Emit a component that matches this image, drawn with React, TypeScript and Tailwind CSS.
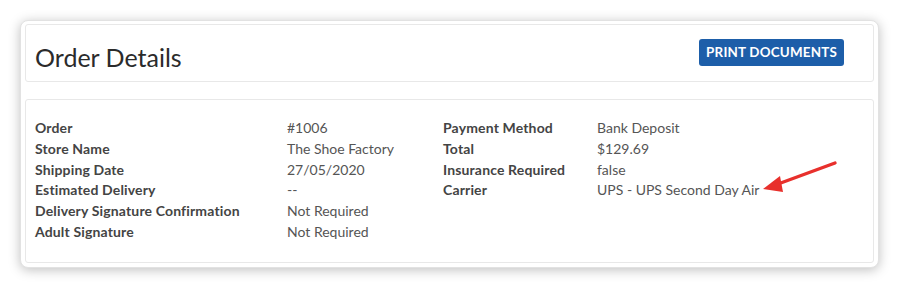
const left = [
  ["Order", "#1006"],
  ["Store Name", "The Shoe Factory"],
  ["Shipping Date", "27/05/2020"],
  ["Estimated Delivery", "--"],
  ["Delivery Signature Confirmation", "Not Required"],
  ["Adult Signature", "Not Required"],
];

const right = [
  ["Payment Method", "Bank Deposit"],
  ["Total", "$129.69"],
  ["Insurance Required", "false"],
  ["Carrier", "UPS - UPS Second Day Air"],
];

export default function App() {
  return (
    <div className="h-[287px] w-[900px] bg-white pl-[20px] pt-[20px] font-['Lato',sans-serif]">
      <div className="relative flex h-[248px] w-[859px] flex-col gap-[17px] rounded-[8px] border border-[#e2e2e2] bg-white px-[4px] pt-[3px] shadow-[0_2px_12px_rgba(0,0,0,0.25)]">
        {/* header */}
        <div className="flex h-[58px] items-center justify-between rounded-[3px] border border-[#e8e8e8] pl-[9px] pr-[29px]">
          <h1 className="pt-[8px] text-[25px] leading-none text-[#2b2b2b]">Order Details</h1>
          <button className="-mt-[1px] h-[27px] rounded-[3px] bg-[#1d5ea9] px-[7px] text-[13.4px] font-bold tracking-[0.2px] text-white">
            PRINT DOCUMENTS
          </button>
        </div>

        {/* body */}
        <div className="h-[164px] rounded-[3px] border border-[#e8e8e8] pl-[9px] pt-[18px]">
          <div className="grid grid-cols-[252px_156px_154px_1fr] text-[14px] leading-[20.8px]">
            <div className="col-span-2 grid grid-cols-[252px_156px]">
              {left.map(([k, v]) => (
                <div key={k} className="contents">
                  <span className="font-bold tracking-[0.15px] text-[#444]">{k}</span>
                  <span className="text-[#555]">{v}</span>
                </div>
              ))}
            </div>
            <div className="col-span-2 grid grid-cols-[154px_1fr] content-start">
              {right.map(([k, v]) => (
                <div key={k} className="contents">
                  <span className="font-bold tracking-[0.15px] text-[#444]">{k}</span>
                  <span className="text-[#555]">{v}</span>
                </div>
              ))}
            </div>
          </div>
        </div>

        {/* annotation arrow */}
        <svg
          className="pointer-events-none absolute left-[735px] top-[135px]"
          width="90"
          height="45"
          viewBox="0 0 90 45"
        >
          <line x1="79" y1="7" x2="22" y2="28" stroke="#e8302c" strokeWidth="3.4" strokeLinecap="round" />
          <polygon points="7,33 24,20 27,36" fill="#e8302c" />
        </svg>
      </div>
    </div>
  );
}
